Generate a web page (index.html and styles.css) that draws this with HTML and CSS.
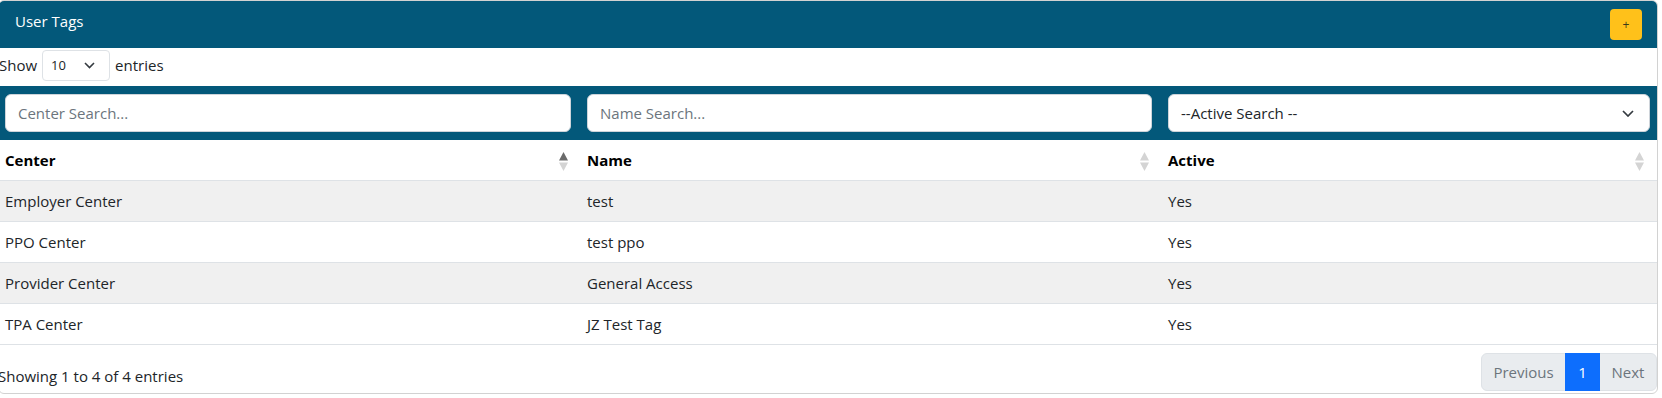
FILE: index.html
```html
<!DOCTYPE html>
<html lang="en">
<head>
<meta charset="utf-8">
<title>User Tags</title>
<link rel="stylesheet" href="styles.css">
</head>
<body>
<div class="card">
  <div class="card-header">
    <span class="title">User Tags</span>
    <button class="add-btn" type="button">+</button>
  </div>
  <div class="length-row">
    <span>Show</span>
    <span class="select-sm">10
      <svg class="chev" width="11" height="7" viewBox="0 0 11 7"><polyline points="1,1 5.5,5.5 10,1" fill="none" stroke="#343a40" stroke-width="1.6"/></svg>
    </span>
    <span>entries</span>
  </div>
  <table class="dt">
    <colgroup><col class="c1"><col class="c2"><col class="c3"></colgroup>
    <thead>
      <tr class="filters">
        <th><div class="field placeholder">Center Search...</div></th>
        <th><div class="field placeholder">Name Search...</div></th>
        <th class="last"><div class="field select">--Active Search --
          <svg class="chev" width="12" height="7" viewBox="0 0 12 7"><polyline points="1,1 6,6 11,1" fill="none" stroke="#343a40" stroke-width="1.7"/></svg>
        </div></th>
      </tr>
      <tr class="heads">
        <th>Center<svg class="sort" width="9" height="19" viewBox="0 0 9 19"><polygon points="4.5,0 9,8.5 0,8.5" fill="#6b6b6b"/><polygon points="0,10.5 9,10.5 4.5,19" fill="#d4d4d4"/></svg></th>
        <th>Name<svg class="sort" width="9" height="19" viewBox="0 0 9 19"><polygon points="4.5,0 9,8.5 0,8.5" fill="#d4d4d4"/><polygon points="0,10.5 9,10.5 4.5,19" fill="#d4d4d4"/></svg></th>
        <th>Active<svg class="sort" width="9" height="19" viewBox="0 0 9 19"><polygon points="4.5,0 9,8.5 0,8.5" fill="#d4d4d4"/><polygon points="0,10.5 9,10.5 4.5,19" fill="#d4d4d4"/></svg></th>
      </tr>
    </thead>
    <tbody>
      <tr class="odd"><td>Employer Center</td><td>test</td><td>Yes</td></tr>
      <tr><td>PPO Center</td><td>test ppo</td><td>Yes</td></tr>
      <tr class="odd"><td>Provider Center</td><td>General Access</td><td>Yes</td></tr>
      <tr><td>TPA Center</td><td>JZ Test Tag</td><td>Yes</td></tr>
    </tbody>
  </table>
  <div class="footer">
    <div class="info">Showing 1 to 4 of 4 entries</div>
    <div class="pagination">
      <span class="page prev disabled">Previous</span>
      <span class="page num active">1</span>
      <span class="page next disabled">Next</span>
    </div>
  </div>
</div>
</body>
</html>
```

FILE: styles.css
```css
html, body {
  margin: 0;
  padding: 0;
  background: #ffffff;
}
body {
  font-family: "Open Sans", "Noto Sans", sans-serif;
  font-size: 15px;
  line-height: 24px;
  color: #212529;
  overflow: hidden;
}
.card {
  box-sizing: border-box;
  width: 1660px;
  height: 394px;
  margin-left: -2px;
  border: 1px solid #d2d2d2;
  border-radius: 6px;
  overflow: hidden;
  background: #fff;
}
.card-header {
  display: flex;
  justify-content: space-between;
  align-items: flex-start;
  height: 47px;
  box-sizing: border-box;
  padding: 8px 15px 8px 16px;
  background: #03587a;
  color: #fff;
}
.title {
  font-size: 15px;
  line-height: 24px;
}
.add-btn {
  width: 32px;
  height: 31px;
  border: none;
  border-radius: 4px;
  background: #ffc11a;
  color: #3a3a1a;
  font-family: "Open Sans", sans-serif;
  font-size: 12px;
  line-height: 31px;
  padding: 0;
}
.length-row {
  display: flex;
  align-items: flex-start;
  gap: 5px;
  height: 38px;
  box-sizing: border-box;
  padding-top: 2px;
  line-height: 31px;
}
.select-sm {
  box-sizing: border-box;
  width: 68px;
  height: 31px;
  border: 1px solid #dee2e6;
  border-radius: 4px;
  padding-left: 8px;
  font-size: 13px;
  line-height: 29px;
  display: flex;
  align-items: center;
  justify-content: space-between;
  padding-right: 14px;
}
.dt {
  width: 1658px;
  border-collapse: collapse;
  table-layout: fixed;
}
.c1 { width: 582px; }
.c2 { width: 581px; }
.c3 { width: 495px; }
.filters th {
  background: #03587a;
  padding: 8px 10px 8px 6px;
  font-weight: normal;
}
.filters th.last {
  padding-right: 7px;
}
.field {
  box-sizing: border-box;
  height: 38px;
  background: #fff;
  border: 1px solid #ced4da;
  border-radius: 6px;
  padding: 6px 12px;
  text-align: left;
  line-height: 24px;
  font-size: 15px;
}
.placeholder {
  color: #6c757d;
}
.field.select {
  color: #212529;
  display: flex;
  align-items: center;
  justify-content: space-between;
  padding-right: 15px;
}
.heads th {
  position: relative;
  height: 24px;
  padding: 8px 6px;
  text-align: left;
  font-weight: 700;
  color: #000;
  border-bottom: 1px solid #dee2e6;
}
.sort {
  position: absolute;
  right: 13px;
  top: 12px;
}
.dt tbody td {
  height: 24px;
  padding: 8px 6px;
  border-bottom: 1px solid #dee2e6;
  color: #212529;
}
.dt tbody tr.odd td {
  background: #f0f0f0;
}
.footer {
  display: flex;
  justify-content: space-between;
  align-items: flex-start;
  margin-top: 8px;
}
.info {
  padding-top: 11px;
  margin-left: -1px;
}
.pagination {
  display: flex;
  height: 38px;
}
.page {
  box-sizing: border-box;
  height: 38px;
  line-height: 36px;
  text-align: center;
  border: 1px solid #dee2e6;
  font-size: 15px;
}
.page + .page {
  margin-left: -1px;
}
.disabled {
  background: #e9ecef;
  color: #6c757d;
}
.prev {
  width: 85px;
  border-radius: 6px 0 0 6px;
}
.num {
  width: 35px;
}
.active {
  background: #0d6efd;
  border-color: #0d6efd;
  color: #fff;
  position: relative;
}
.next {
  width: 58px;
  border-radius: 0 6px 6px 0;
}
```
